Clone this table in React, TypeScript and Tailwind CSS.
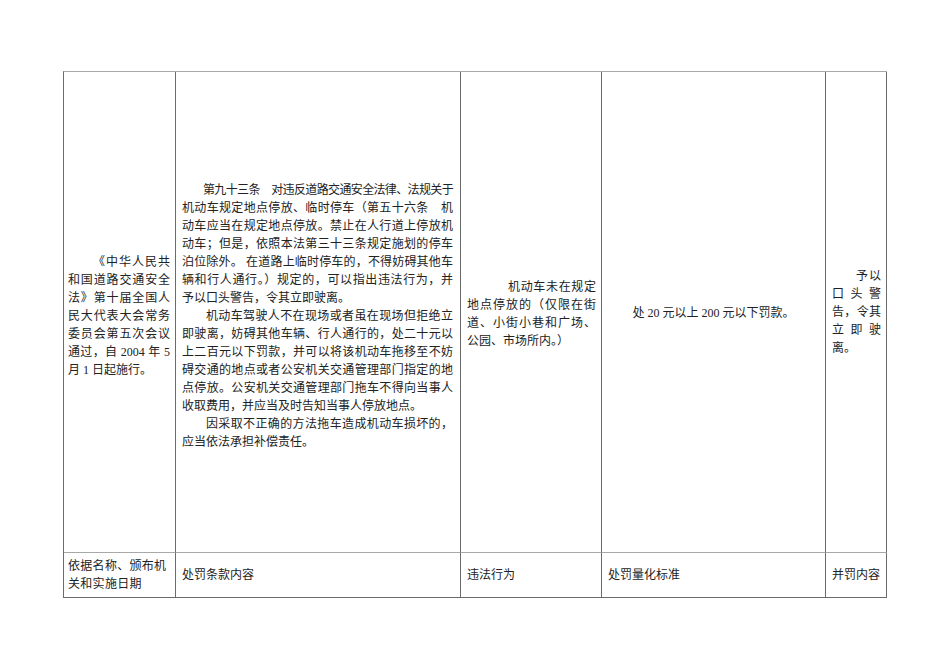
import React from "react"

const font = { fontFamily: '"Liberation Serif", "Noto Sans CJK SC", serif' }

function Line({ text, indent, last, className = "" }: { text: string; indent?: string; last?: boolean; className?: string }) {
  return (
    <div
      className={`h-[18px] leading-[18px] whitespace-nowrap ${indent ?? ""} ${
        last ? "text-left" : "text-justify [text-align-last:justify]"
      } ${className}`}
    >
      {text}
    </div>
  )
}

const basis = [
  { t: "《中华人民共", i: "pl-[25px]" },
  { t: "和国道路交通安全" },
  { t: "法》第十届全国人" },
  { t: "民大代表大会常务" },
  { t: "委员会第五次会议" },
  { t: "通过，自 2004 年 5" },
  { t: "月 1 日起施行。", last: true },
]

const clause = [
  { t: "第九十三条　对违反道路交通安全法律、法规关于", i: "pl-[21px]", c: "tracking-[-0.7px]" },
  { t: "机动车规定地点停放、临时停车（第五十六条　机" },
  { t: "动车应当在规定地点停放。禁止在人行道上停放机" },
  { t: "动车；但是，依照本法第三十三条规定施划的停车" },
  { t: "泊位除外。 在道路上临时停车的，不得妨碍其他车" },
  { t: "辆和行人通行。）规定的，可以指出违法行为，并" },
  { t: "予以口头警告，令其立即驶离。", last: true },
  { t: "机动车驾驶人不在现场或者虽在现场但拒绝立", i: "pl-[24px]" },
  { t: "即驶离，妨碍其他车辆、行人通行的，处二十元以" },
  { t: "上二百元以下罚款，并可以将该机动车拖移至不妨" },
  { t: "碍交通的地点或者公安机关交通管理部门指定的地" },
  { t: "点停放。公安机关交通管理部门拖车不得向当事人" },
  { t: "收取费用，并应当及时告知当事人停放地点。", last: true },
  { t: "因采取不正确的方法拖车造成机动车损坏的，", i: "pl-[24px]" },
  { t: "应当依法承担补偿责任。", last: true },
]

const act = [
  { t: "机动车未在规定", i: "pl-[41px]" },
  { t: "地点停放的（仅限在街" },
  { t: "道、小街小巷和广场、" },
  { t: "公园、市场所内。）", last: true },
]

const extra = [
  { t: "予以", i: "pl-[24px]" },
  { t: "口头警" },
  { t: "告，令其" },
  { t: "立即驶" },
  { t: "离。", last: true },
]

type L = { t: string; i?: string; c?: string; last?: boolean }

function Lines({ items }: { items: L[] }) {
  return (
    <div className="w-full">
      {items.map((l, k) => (
        <Line key={k} text={l.t} indent={l.i} last={l.last} className={l.c} />
      ))}
    </div>
  )
}

export default function App() {
  const top = "border-r border-r-[#6b6b6b] border-b border-b-[#a8a8a8] flex items-center"
  const head = "border-r border-r-[#6b6b6b] flex items-center"
  return (
    <div className="w-[950px] h-[672px] bg-white text-[12px] text-[#222222]" style={font}>
      <div className="pt-[71px] pl-[63px]">
        <div className="w-[824px] grid grid-cols-[112px_285px_141px_224px_61px] grid-rows-[481px_44px] border-l border-l-[#6b6b6b] border-t border-t-[#a8a8a8] border-b border-b-[#6b6b6b]">
          <div className={`${top} pl-[4px] pr-[5px] pt-[8px]`}>
            <Lines items={basis} />
          </div>
          <div className={`${top} pl-[6px] pr-[7px] pt-[8px]`}>
            <Lines items={clause} />
          </div>
          <div className={`${top} pl-[6px] pr-[5px] pt-[4px]`}>
            <Lines items={act} />
          </div>
          <div className={`${top} justify-center pt-[2px]`}>
            <span>处 20 元以上 200 元以下罚款。</span>
          </div>
          <div className={`${top} pl-[6px] pr-[5px]`}>
            <Lines items={extra} />
          </div>

          <div className={`${head} pl-[4px]`}>
            <div className="tracking-[0.3px]">
              <div className="h-[18px] leading-[18px]">依据名称、颁布机</div>
              <div className="h-[18px] leading-[18px]">关和实施日期</div>
            </div>
          </div>
          <div className={`${head} pl-[6px]`}>处罚条款内容</div>
          <div className={`${head} pl-[6px]`}>违法行为</div>
          <div className={`${head} pl-[6px]`}>处罚量化标准</div>
          <div className={`${head} pl-[6px]`}>并罚内容</div>
        </div>
      </div>
    </div>
  )
}
